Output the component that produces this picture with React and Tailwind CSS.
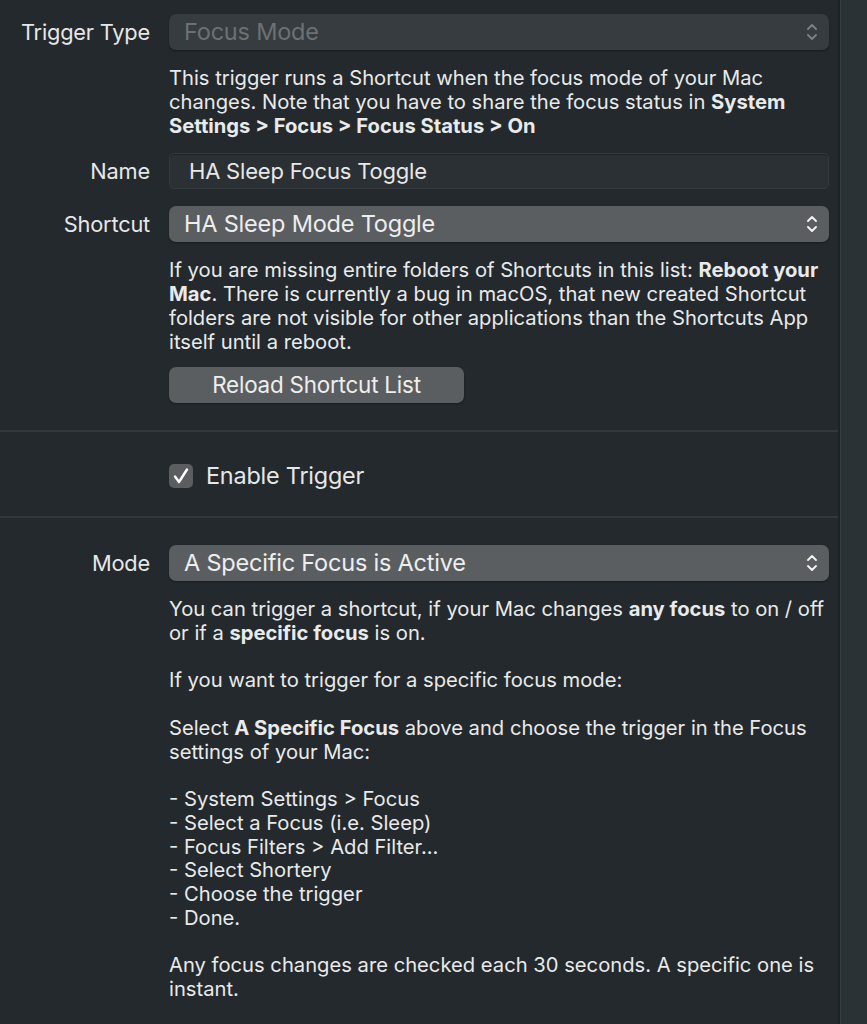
import React from "react";

const font = { fontFamily: "Inter, 'Noto Sans', sans-serif" };

function Chevrons({ dim }) {
  return (
    <svg width="14" height="24" viewBox="0 0 14 24" fill="none">
      <path d="M3 9 L7 5 L11 9" stroke={dim ? "#7a7f82" : "#f2f2f2"} strokeWidth="1.9" strokeLinecap="round" strokeLinejoin="round" />
      <path d="M3 15 L7 19 L11 15" stroke={dim ? "#7a7f82" : "#f2f2f2"} strokeWidth="1.9" strokeLinecap="round" strokeLinejoin="round" />
    </svg>
  );
}

function Row({ label, children }) {
  return (
    <div className="flex items-center">
      <div className="w-[150px] shrink-0 whitespace-nowrap text-right text-[21.8px] tracking-[-0.2px] text-[#e6e7e8]">{label}</div>
      <div className="ml-[19px] flex-1">{children}</div>
    </div>
  );
}

function Popup({ value, disabled }) {
  return (
    <div
      className={`flex h-[36px] items-center justify-between rounded-[7px] pl-[15px] pr-[10px] text-[23.5px] tracking-[-0.2px] shadow-[0_1px_2px_rgba(0,0,0,0.35)] ${
        disabled ? "bg-[#363c3f] text-[#6c7174]" : "bg-[#5b5e60] text-[#eeeeee]"
      }`}
    >
      <span>{value}</span>
      <Chevrons dim={disabled} />
    </div>
  );
}

function Text({ children, className = "" }) {
  return <div className={`whitespace-nowrap text-[20.2px] text-[#e9eaeb] ${className}`}>{children}</div>;
}

export default function App() {
  return (
    <div className="flex h-[1024px] w-[867px] overflow-hidden bg-[#23292c]" style={font}>
      <div className="w-[838px] shrink-0">
        <div className="pt-[14px]">
          <Row label="Trigger Type">
            <div className="mr-[9px]">
              <Popup value="Focus Mode" disabled />
            </div>
          </Row>
          <div className="ml-[169px] mt-[16px]">
            <Text className="leading-[24px]">
              <div>This trigger runs a Shortcut when the focus mode of your Mac</div>
              <div>
                changes. Note that you have to share the focus status in <b className="font-bold">System</b>
              </div>
              <div className="font-bold">Settings &gt; Focus &gt; Focus Status &gt; On</div>
            </Text>
          </div>
          <div className="mt-[15px]">
            <Row label="Name">
              <div className="mr-[9px] flex h-[36px] items-center rounded-[5px] border border-[#343a3d] bg-[#2a3033] pl-[19px] text-[22px] tracking-[-0.2px] text-[#e8e8e8] shadow-[inset_0_1px_1px_rgba(0,0,0,0.3)]">
                HA Sleep Focus Toggle
              </div>
            </Row>
          </div>
          <div className="mt-[17px]">
            <Row label="Shortcut">
              <div className="mr-[9px]">
                <Popup value="HA Sleep Mode Toggle" />
              </div>
            </Row>
          </div>
          <div className="ml-[169px] mt-[16px]">
            <Text className="leading-[24px]">
              <div>
                If you are missing entire folders of Shortcuts in this list: <b className="font-bold">Reboot your</b>
              </div>
              <div>
                <b className="font-bold">Mac</b>. There is currently a bug in macOS, that new created Shortcut
              </div>
              <div>folders are not visible for other applications than the Shortcuts App</div>
              <div>itself until a reboot.</div>
            </Text>
            <button className="mt-[13px] flex h-[36px] w-[295px] items-center justify-center rounded-[7px] bg-[#5b5e60] text-[22.4px] tracking-[-0.2px] text-[#eeeeee] shadow-[0_1px_2px_rgba(0,0,0,0.35)]">
              Reload Shortcut List
            </button>
          </div>
        </div>

        <div className="mt-[27px] h-[2px] bg-[#31383b]" />

        <div className="flex h-[84px] items-center pl-[169px] pt-[4px]">
          <div className="flex h-[24px] w-[24px] items-center justify-center rounded-[5px] bg-[#5a5e60]">
            <svg width="20" height="20" viewBox="0 0 20 20" fill="none">
              <path d="M4 10.5 L8 16 L16 3.5" stroke="#ffffff" strokeWidth="2.4" strokeLinecap="round" strokeLinejoin="round" />
            </svg>
          </div>
          <span className="ml-[13px] text-[23.4px] tracking-[-0.2px] text-[#e6e7e8]">Enable Trigger</span>
        </div>

        <div className="h-[2px] bg-[#31383b]" />

        <div className="pt-[27px]">
          <Row label="Mode">
            <div className="mr-[9px]">
              <Popup value="A Specific Focus is Active" />
            </div>
          </Row>
          <div className="ml-[169px] mt-[16px]">
            <Text className="leading-[23.75px]">
              <div>
                You can trigger a shortcut, if your Mac changes <b className="font-bold">any focus</b> to on / off
              </div>
              <div>
                or if a <b className="font-bold">specific focus</b> is on.
              </div>
              <div>&nbsp;</div>
              <div>If you want to trigger for a specific focus mode:</div>
              <div>&nbsp;</div>
              <div>
                Select <b className="font-bold">A Specific Focus</b> above and choose the trigger in the Focus
              </div>
              <div>settings of your Mac:</div>
              <div>&nbsp;</div>
              <div>- System Settings &gt; Focus</div>
              <div>- Select a Focus (i.e. Sleep)</div>
              <div>- Focus Filters &gt; Add Filter...</div>
              <div>- Select Shortery</div>
              <div>- Choose the trigger</div>
              <div>- Done.</div>
              <div>&nbsp;</div>
              <div>Any focus changes are checked each 30 seconds. A specific one is</div>
              <div>instant.</div>
            </Text>
          </div>
        </div>
      </div>
      <div className="w-[2px] shrink-0 bg-[#1d2225]" />
      <div className="flex-1 border-l border-[#363d40] bg-[#2b3235]" />
    </div>
  );
}
